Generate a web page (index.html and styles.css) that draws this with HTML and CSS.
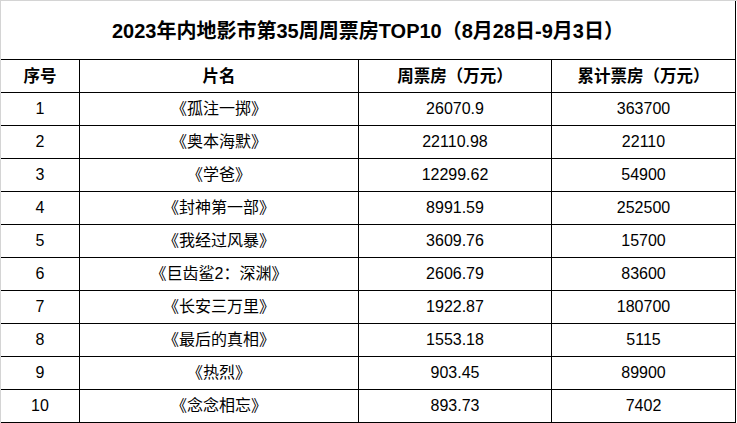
FILE: index.html
```html
<!DOCTYPE html>
<html lang="zh-CN">
<head>
<meta charset="utf-8">
<title>2023年内地影市第35周周票房TOP10</title>
<link rel="stylesheet" href="styles.css">
</head>
<body>
<div class="sheet">
  <div class="grid">
    <div class="cell title">2023年内地影市第35周周票房TOP10（8月28日-9月3日）</div>
    <div class="cell head">序号</div>
    <div class="cell head">片名</div>
    <div class="cell head">周票房（万元）</div>
    <div class="cell head">累计票房（万元）</div>

    <div class="cell">1</div><div class="cell">《孤注一掷》</div><div class="cell">26070.9</div><div class="cell">363700</div>
    <div class="cell">2</div><div class="cell">《奥本海默》</div><div class="cell">22110.98</div><div class="cell">22110</div>
    <div class="cell">3</div><div class="cell">《学爸》</div><div class="cell">12299.62</div><div class="cell">54900</div>
    <div class="cell">4</div><div class="cell">《封神第一部》</div><div class="cell">8991.59</div><div class="cell">252500</div>
    <div class="cell">5</div><div class="cell">《我经过风暴》</div><div class="cell">3609.76</div><div class="cell">15700</div>
    <div class="cell">6</div><div class="cell">《巨齿鲨2：深渊》</div><div class="cell">2606.79</div><div class="cell">83600</div>
    <div class="cell">7</div><div class="cell">《长安三万里》</div><div class="cell">1922.87</div><div class="cell">180700</div>
    <div class="cell">8</div><div class="cell">《最后的真相》</div><div class="cell">1553.18</div><div class="cell">5115</div>
    <div class="cell">9</div><div class="cell">《热烈》</div><div class="cell">903.45</div><div class="cell">89900</div>
    <div class="cell">10</div><div class="cell">《念念相忘》</div><div class="cell">893.73</div><div class="cell">7402</div>
  </div>
</div>
</body>
</html>
```
FILE: styles.css
```css
html, body {
  margin: 0;
  padding: 0;
  background: #ffffff;
}

body {
  font-family: "Liberation Sans", "Noto Sans CJK SC", sans-serif;
  color: #000000;
  width: 737px;
  height: 423px;
  overflow: hidden;
}

.sheet {
  border-top: 1px solid #d4d4d4;
  border-left: 1px solid #d4d4d4;
  height: 422px;
  width: 736px;
}

.grid {
  display: grid;
  grid-template-columns: 79px 279px 193px 184px;
  grid-template-rows: 59px repeat(11, 33px);
  width: 735px;
}

.cell {
  box-sizing: border-box;
  border-right: 1px solid #000;
  border-bottom: 1px solid #000;
  display: flex;
  align-items: center;
  justify-content: center;
  font-size: 16px;
  line-height: 1;
  white-space: nowrap;
}

.title {
  grid-column: 1 / -1;
  font-size: 20px;
  font-weight: bold;
  padding-top: 2px;
}

.head {
  font-size: 16.5px;
  font-weight: bold;
}
```
